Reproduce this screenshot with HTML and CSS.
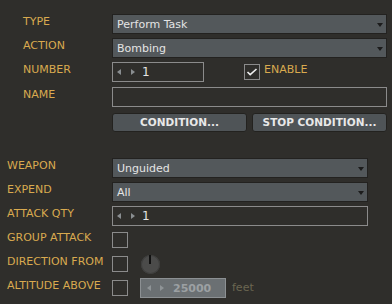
FILE: index.html
```html
<!DOCTYPE html>
<html lang="en">
<head>
    <meta charset="UTF-8">
    <title>Task Settings</title>
    <link rel="stylesheet" href="styles.css">
</head>
<body>
    <div class="panel">
        <section class="group group-task">
            <div class="row">
                <span class="label">TYPE</span>
                <div class="combo"><span>Perform Task</span><span class="arrow"></span></div>
            </div>
            <div class="row">
                <span class="label">ACTION</span>
                <div class="combo"><span>Bombing</span><span class="arrow"></span></div>
            </div>
            <div class="row">
                <span class="label">NUMBER</span>
                <div class="spin spin-short">
                    <span class="tri tri-left"></span><span class="tri tri-right"></span><span class="value">1</span>
                </div>
                <div class="check checked enable-check">
                    <svg width="16" height="16" viewBox="0 0 16 16"><polyline points="3.5,8 6.2,10.6 12.5,5" fill="none" stroke="#f0f0f0" stroke-width="1.6"/></svg>
                </div>
                <span class="label enable-label">ENABLE</span>
            </div>
            <div class="row row-name">
                <span class="label">NAME</span>
                <div class="input"></div>
            </div>
            <div class="row row-buttons">
                <span class="label"></span>
                <div class="buttons">
                    <button class="btn">CONDITION...</button>
                    <button class="btn">STOP CONDITION...</button>
                </div>
            </div>
        </section>

        <section class="group group-weapon">
            <div class="row">
                <span class="label">WEAPON</span>
                <div class="combo"><span>Unguided</span><span class="arrow"></span></div>
            </div>
            <div class="row">
                <span class="label">EXPEND</span>
                <div class="combo"><span>All</span><span class="arrow"></span></div>
            </div>
            <div class="row">
                <span class="label">ATTACK QTY</span>
                <div class="spin">
                    <span class="tri tri-left"></span><span class="tri tri-right"></span><span class="value">1</span>
                </div>
            </div>
            <div class="row">
                <span class="label">GROUP ATTACK</span>
                <div class="check"></div>
            </div>
            <div class="row">
                <span class="label">DIRECTION FROM</span>
                <div class="check"></div>
                <div class="knob"><span class="knob-tick"></span></div>
            </div>
            <div class="row">
                <span class="label">ALTITUDE ABOVE</span>
                <div class="check"></div>
                <div class="spin spin-disabled">
                    <span class="tri tri-left"></span><span class="tri tri-right"></span><span class="value">25000</span>
                </div>
                <span class="unit">feet</span>
            </div>
        </section>
    </div>
</body>
</html>
```

FILE: styles.css
```css
body {
    margin: 0;
    width: 392px;
    height: 304px;
    overflow: hidden;
    background: #2f2e2b;
    font-family: 'DejaVu Sans', sans-serif;
    font-size: 11px;
    color: #e4e4e4;
}
.panel {
    display: flex;
    flex-direction: column;
}
.group {
    display: flex;
    flex-direction: column;
    gap: 4px;
}
.group-task {
    padding: 14px 5px 0 23px;
}
.group-weapon {
    padding: 26px 24px 0 7px;
}
.row {
    display: flex;
    align-items: center;
    height: 20px;
}
.row-name {
    margin-top: 1px;
}
.row-buttons {
    margin-top: 1px;
}
.label {
    flex: none;
    color: #d9aa4f;
    margin-bottom: 5px;
    white-space: nowrap;
}
.group-task .label {
    width: 89px;
}
.group-weapon .label {
    width: 105px;
}
.combo {
    flex: 1;
    height: 18px;
    display: flex;
    align-items: center;
    justify-content: space-between;
    padding: 0 3px 0 4px;
    background: #53585b;
    border: 1px solid #232220;
}
.arrow {
    width: 0;
    height: 0;
    border-left: 3.5px solid transparent;
    border-right: 3.5px solid transparent;
    border-top: 4px solid #1c1c1c;
    margin-top: 1px;
}
.spin {
    flex: 1;
    height: 18px;
    display: flex;
    align-items: center;
    padding-left: 4px;
    border: 1px solid #8b8b8b;
}
.spin-short {
    flex: none;
    width: 86px;
}
.tri {
    width: 0;
    height: 0;
    border-top: 3.5px solid transparent;
    border-bottom: 3.5px solid transparent;
}
.tri-left {
    border-right: 4px solid #8a8e91;
}
.tri-right {
    border-left: 4px solid #8a8e91;
    margin-left: 10px;
}
.value {
    margin-left: 7px;
    font-size: 12px;
}
.check {
    flex: none;
    width: 14px;
    height: 14px;
    border: 1px solid #8b8b8b;
}
.check svg {
    display: block;
    margin: -1px;
}
.enable-check {
    margin-left: 40px;
}
.enable-label {
    margin-left: 4px;
}
.input {
    flex: 1;
    height: 18px;
    border: 1px solid #8b8b8b;
}
.buttons {
    flex: 1;
    display: flex;
    gap: 5px;
    height: 19px;
}
.btn {
    flex: 1;
    margin: 0;
    padding: 0;
    background: #4f5457;
    border: 1px solid #23221f;
    border-radius: 3px;
    color: #e8e8e8;
    font-family: 'DejaVu Sans', sans-serif;
    font-size: 10.5px;
    font-weight: bold;
}
.knob {
    flex: none;
    position: relative;
    width: 19px;
    height: 19px;
    margin-left: 13px;
    border-radius: 50%;
    background: #4b4b4a;
    box-shadow: inset 0 0 0 1px #3e3e3d;
}
.knob-tick {
    position: absolute;
    left: 8px;
    top: 0;
    width: 2px;
    height: 9px;
    background: #111;
}
.spin-disabled {
    flex: none;
    width: 80px;
    height: 18px;
    margin-left: 12px;
    background: #6b7073;
    border-color: #8c9093;
    color: #9ca0a3;
    font-weight: bold;
}
.spin-disabled .tri-left {
    border-right-color: #8f9497;
    margin-left: 2px;
}
.spin-disabled .tri-right {
    border-left-color: #8f9497;
    margin-left: 9px;
}
.spin-disabled .value {
    font-size: 11px;
    margin-left: 9px;
}
.unit {
    margin-left: 6px;
    color: #6b6651;
    margin-bottom: 2px;
}
```
